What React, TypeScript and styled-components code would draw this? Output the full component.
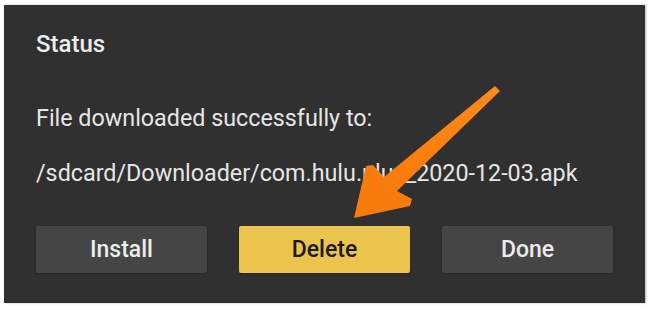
import styled, { createGlobalStyle } from 'styled-components';

const GlobalStyle = createGlobalStyle`
  html, body {
    margin: 0;
    padding: 0;
    background: #ffffff;
  }
  body {
    font-family: Roboto, "Liberation Sans", sans-serif;
  }
`;

function Arrow() {
  return (
    <ArrowSvg width="652" height="309" viewBox="0 0 652 309">
      <defs>
        <linearGradient id="arrowFill" x1="497" y1="88" x2="355" y2="218" gradientUnits="userSpaceOnUse">
          <stop offset="0" stopColor="#f98a1c" />
          <stop offset="0.6" stopColor="#fb7d0c" />
          <stop offset="1" stopColor="#f47a0a" />
        </linearGradient>
      </defs>
      <path
        d="M495 86 L500 91 L397 191 L412 199 L410 206 L354 218 L366 166 L373 165 L384 177 Z"
        fill="url(#arrowFill)"
      />
    </ArrowSvg>
  );
}

export default function App() {
  return (
    <>
      <GlobalStyle />
      <Page>
        <Dialog>
          <Title>Status</Title>
          <Message>File downloaded successfully to:</Message>
          <Path>/sdcard/Downloader/com.hulu.plus_2020-12-03.apk</Path>
          <Actions>
            <ActionButton>Install</ActionButton>
            <ActionButton $primary>Delete</ActionButton>
            <ActionButton>Done</ActionButton>
          </Actions>
        </Dialog>
        <Arrow />
      </Page>
    </>
  );
}

const Page = styled.main`
  position: relative;
  width: 652px;
  height: 309px;
  padding: 5px 7px 6px 4px;
  box-sizing: border-box;
  background: #ffffff;
`;

const Dialog = styled.section`
  height: 100%;
  box-sizing: border-box;
  background: #303030;
  padding: 26px 32px 30px;
  display: flex;
  flex-direction: column;
  box-shadow: 1px 0 2px rgba(0, 0, 0, 0.3);
`;

const Title = styled.h2`
  margin: 0;
  font-size: 24px;
  line-height: 26px;
  font-weight: 500;
  color: #ececec;
`;

const Message = styled.p`
  margin: 47px 0 0;
  font-size: 23.3px;
  line-height: 28px;
  font-weight: 400;
  color: #e6e6e6;
`;

const Path = styled(Message)`
  margin-top: 27px;
`;

const Actions = styled.div`
  margin-top: auto;
  display: grid;
  grid-template-columns: repeat(3, 171px);
  justify-content: space-between;
`;

const ActionButton = styled.button<{ $primary?: boolean }>`
  height: 47px;
  border: none;
  border-radius: 2px;
  font-family: Roboto, "Liberation Sans", sans-serif;
  font-size: 23px;
  font-weight: 500;
  background: ${(p) => (p.$primary ? '#ecc34c' : '#454545')};
  color: ${(p) => (p.$primary ? '#1c1a12' : '#ececec')};
  box-shadow: 0 1px 2px rgba(0, 0, 0, 0.25);
  cursor: pointer;
`;

const ArrowSvg = styled.svg`
  position: absolute;
  left: 0;
  top: 0;
  pointer-events: none;
`;
